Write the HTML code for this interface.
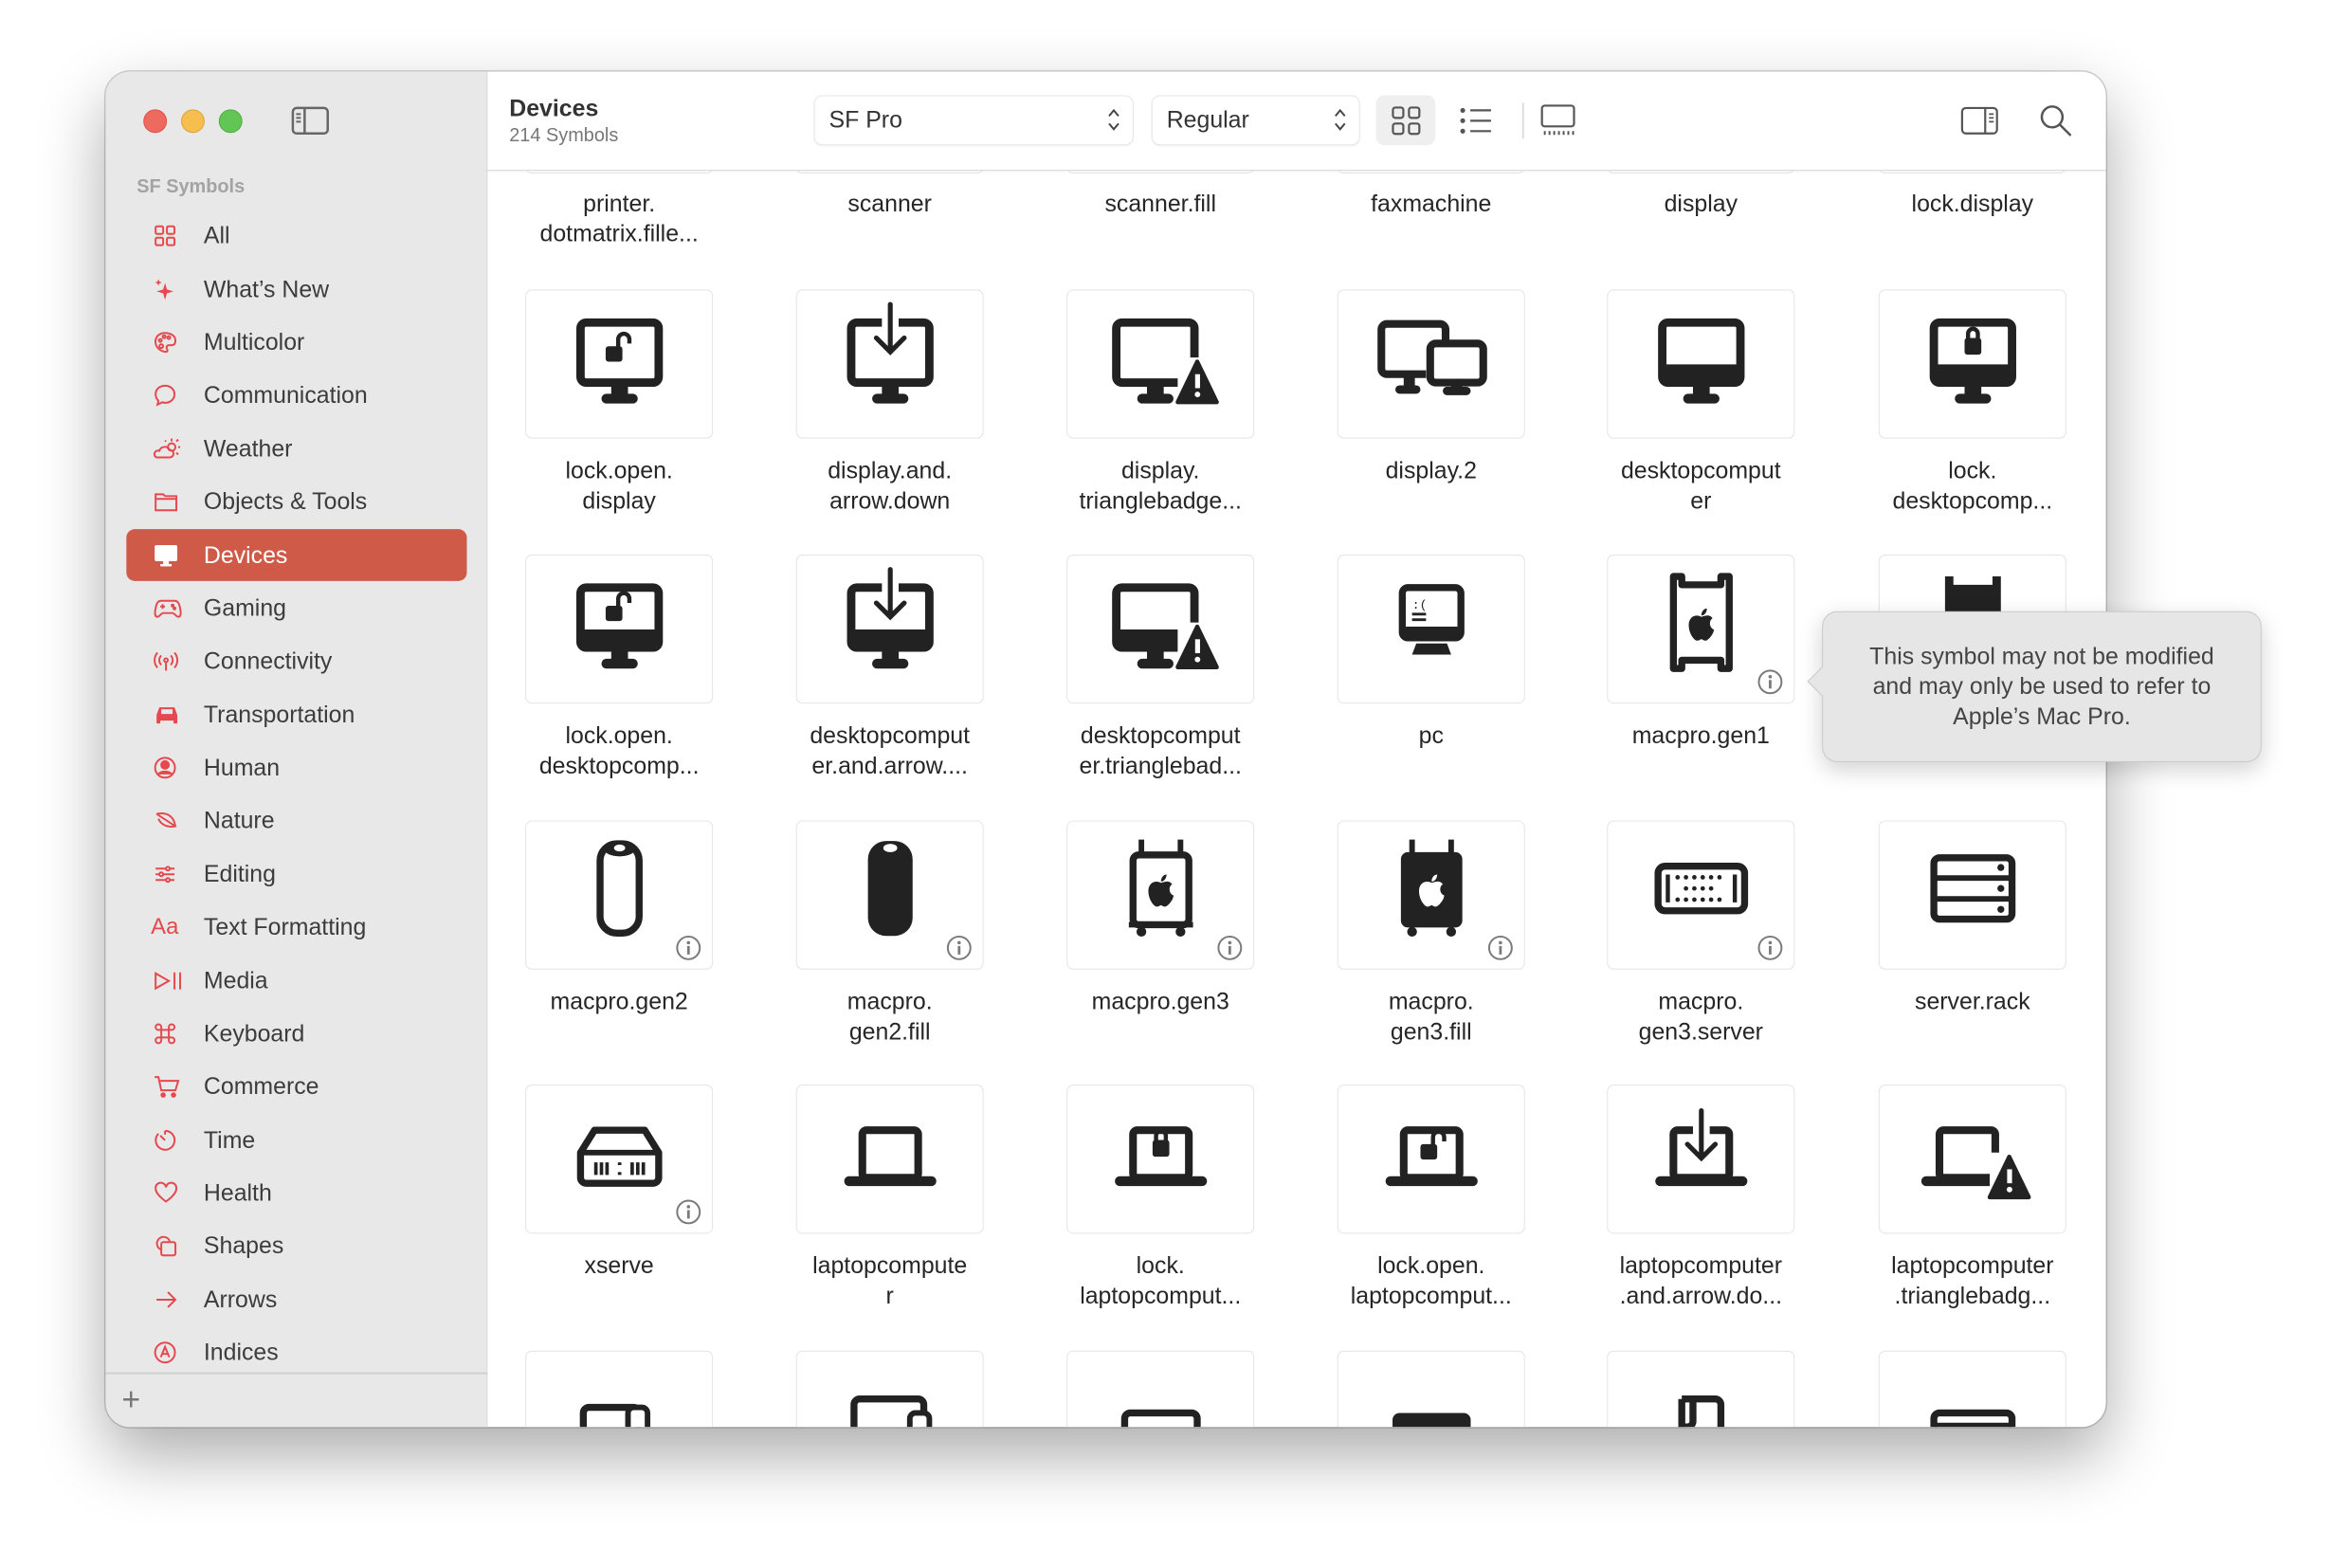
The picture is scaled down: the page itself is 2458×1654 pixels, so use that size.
<!DOCTYPE html>
<html><head><meta charset="utf-8"><style>
*{margin:0;padding:0;box-sizing:border-box}
body{width:2458px;height:1654px;background:#fff;position:relative;overflow:hidden;font-family:"Liberation Sans",sans-serif;}
.root{position:absolute;left:0;top:0;width:2470px;height:1662px;transform:scale(0.9949);transform-origin:0 0}
.win{position:absolute;left:112px;top:76px;width:2121px;height:1437px;border-radius:26px;overflow:hidden;background:#fff;box-shadow:0 30px 70px rgba(0,0,0,.33),0 0 0 1.5px rgba(0,0,0,.18);}
.side{position:absolute;left:0;top:0;width:405px;height:1437px;background:#e8e8e8;border-right:1px solid #dadada}
.tl{position:absolute;top:40px;width:25px;height:25px;border-radius:50%}
.it{position:absolute;left:0;width:405px;height:40px;line-height:40px;font-size:25px;color:#3c3c3c}
.it span{position:absolute;left:104px}
.it svg{position:absolute;left:50px;top:7px}
.sel{position:absolute;left:22px;width:361px;height:55px;background:#cf5a48;border-radius:9px}
.main{position:absolute;left:405px;top:0;width:1716px;height:1437px}
.tb{position:absolute;left:0;top:0;width:1716px;height:105px;background:#fff;border-bottom:1.5px solid #d9d9d9;z-index:5;box-shadow:0 1px 3px rgba(0,0,0,.06)}
.pop{position:absolute;top:25px;height:53px;border:1.5px solid #e6e6e6;border-radius:9px;background:#fff;font-size:25px;color:#333;line-height:50px;padding-left:15px;box-shadow:0 1px 2px rgba(0,0,0,.05)}
.content{position:absolute;left:0;top:105px;width:1716px;height:1332px;overflow:hidden}
.tile{position:absolute;width:199px;height:158px;border:1.5px solid #e3e3e3;border-radius:7px;background:#fff}
.tile svg.ic{position:absolute;left:25px;top:-3px;width:148px;height:148px}
.info{position:absolute;left:158px;top:120px;width:28px;height:28px}
.lb{position:absolute;width:287px;text-align:center;font-size:25px;line-height:32px;color:#262626}
.tip{position:absolute;left:1932px;top:648px;width:466px;height:160px;background:#e6e6e6;border:1.5px solid #c9c9c9;border-radius:16px;box-shadow:0 8px 24px rgba(0,0,0,.18);font-size:25px;line-height:32px;color:#444;text-align:center;padding-top:31px;z-index:20}
.tip:before{content:"";position:absolute;left:-12px;top:62px;width:22px;height:22px;background:#e6e6e6;border-left:1.5px solid #c9c9c9;border-bottom:1.5px solid #c9c9c9;transform:rotate(45deg)}
</style></head><body>
<svg width="0" height="0" style="position:absolute">
<defs>
<g id="mon"><rect x="22" y="25" width="56" height="43" rx="4" fill="none" stroke="#222" stroke-width="6"/><rect x="44" y="68" width="12" height="10" fill="#222"/><rect x="37" y="76" width="26" height="7" rx="3.5" fill="#222"/></g>
<g id="desk"><use href="#mon"/><rect x="22" y="55" width="56" height="14" rx="3" fill="#222"/></g>
<g id="lockc"><rect x="44" y="40" width="12" height="12" rx="2" fill="#222"/><path d="M46.5 41v-4a3.5 3.5 0 0 1 7 0v4" fill="none" stroke="#222" stroke-width="3"/></g>
<g id="locko"><rect x="40" y="42" width="12" height="11" rx="2" fill="#222"/><path d="M49 43v-6a4 4 0 0 1 8 0v3" fill="none" stroke="#222" stroke-width="3"/></g>
<g id="arr"><rect x="44" y="18" width="12" height="12" fill="#fff"/><path d="M50 12v34M40 36l10 10 10-10" fill="none" stroke="#222" stroke-width="3.5" stroke-linecap="round"/></g>
<g id="tri"><rect x="62" y="50" width="28" height="34" fill="#fff"/><path d="M76 53L90 82H62Z" fill="#222" stroke="#222" stroke-width="3" stroke-linejoin="round"/><rect x="74.5" y="62" width="3.5" height="10" fill="#fff"/><circle cx="76.2" cy="76.5" r="2" fill="#fff"/></g>
<g id="lap"><rect x="30" y="34" width="40" height="34" rx="3" fill="none" stroke="#222" stroke-width="5.5"/><rect x="17" y="67" width="66" height="7" rx="3.5" fill="#222"/></g>
<g id="apple"><path d="M50 46c-3-2-9-1-9 6c0 6 4 11 6 11c2 0 2-1 3-1s1 1 3 1c2 0 6-5 6-8c-3-1-4-6-1-8c-2-3-5-2-8-1z" fill="#222"/><path d="M50 45c0-3 2-5 4-5c0 3-2 5-4 5z" fill="#222"/></g>
<g id="info"><circle cx="14" cy="14" r="12" fill="#fff" stroke="#7a7a7a" stroke-width="2"/><rect x="12.6" y="12" width="2.8" height="9" fill="#7a7a7a"/><circle cx="14" cy="8.5" r="1.8" fill="#7a7a7a"/></g>
</defs></svg>
<div class="root">
<div class="win">
<div class="side">
 <div class="tl" style="left:40px;background:#ee6a5f;border:1px solid #d9534a"></div>
 <div class="tl" style="left:80px;background:#f5be4f;border:1px solid #dba53c"></div>
 <div class="tl" style="left:120px;background:#62c655;border:1px solid #50ac43"></div>
 <svg style="position:absolute;left:197px;top:37px" width="40" height="30" viewBox="0 0 40 30"><rect x="1.5" y="1.5" width="37" height="27" rx="4" fill="none" stroke="#666" stroke-width="2.5"/><path d="M14 2v26" stroke="#666" stroke-width="2.5"/><path d="M5 8h5M5 12h5M5 16h5" stroke="#666" stroke-width="2"/></svg>
 <div style="position:absolute;left:33px;top:111px;font-size:20px;font-weight:bold;color:#a3a3a3">SF Symbols</div>
 <div class="sel" style="top:485px"></div>

 <div class="it" style="top:154px"><svg width="26" height="26" viewBox="0 0 26 26" fill="none" stroke="#e5484d" stroke-width="2"><rect x="3" y="3" width="8" height="8" rx="1.5"/><rect x="15" y="3" width="8" height="8" rx="1.5"/><rect x="3" y="15" width="8" height="8" rx="1.5"/><rect x="15" y="15" width="8" height="8" rx="1.5"/></svg><span>All</span></div>
 <div class="it" style="top:211px"><svg width="26" height="26" viewBox="0 0 26 26" fill="#e5484d"><path d="M13 6l2 7 7 2-7 2-2 7-2-7-7-2 7-2z"/><path d="M6 2l1 2.5 2.5 1-2.5 1L6 9 5 6.5 2.5 5.5 5 4.5z"/></svg><span>What’s New</span></div>
 <div class="it" style="top:267px"><svg width="26" height="26" viewBox="0 0 26 26" fill="none" stroke="#e5484d" stroke-width="2"><path d="M13 3C6 3 2 8 3 14c1 6 7 9 11 9 2 0 2-2 1-3-1-2 0-4 2-4h3c3 0 4-2 4-5C24 6 19 3 13 3z"/><circle cx="8" cy="11" r="1.5"/><circle cx="12" cy="7" r="1.5"/><circle cx="17" cy="8" r="1.5"/><circle cx="9" cy="17" r="2"/></svg><span>Multicolor</span></div>
 <div class="it" style="top:323px"><svg width="26" height="26" viewBox="0 0 26 26" fill="none" stroke="#e5484d" stroke-width="2"><path d="M13 3c6 0 10 4 10 9s-4 9-10 9c-1 0-2 0-3-.5L5 23l1-4c-2-2-3-4-3-7 0-5 4-9 10-9z"/></svg><span>Communication</span></div>
 <div class="it" style="top:380px"><svg width="30" height="26" viewBox="0 0 30 26" fill="none" stroke="#e5484d" stroke-width="2"><path d="M4 22h14a4 4 0 0 0 0-8 6 6 0 0 0-11 1 3.5 3.5 0 0 0-3 7z"/><circle cx="20" cy="11" r="4"/><path d="M20 2v3M27 11h2M25 5l2-2M25 17l2 2M14 5l-1-1"/></svg><span>Weather</span></div>
 <div class="it" style="top:436px"><svg width="28" height="26" viewBox="0 0 28 26" fill="none" stroke="#e5484d" stroke-width="2"><path d="M3 5h8l2 2h12v15H3z"/><path d="M3 10h22"/></svg><span>Objects &amp; Tools</span></div>
 <div class="it" style="top:493px;color:#fff"><svg width="28" height="26" viewBox="0 0 28 26" fill="#fff"><rect x="2" y="2" width="24" height="17" rx="2"/><rect x="11" y="19" width="6" height="4"/><rect x="8" y="22" width="12" height="2.5"/></svg><span>Devices</span></div>
 <div class="it" style="top:549px"><svg width="32" height="26" viewBox="0 0 32 26" fill="none" stroke="#e5484d" stroke-width="2"><path d="M9 5h14c4 0 5 3 6 8 1 5 1 9-2 9-2 0-4-4-6-4H11c-2 0-4 4-6 4-3 0-3-4-2-9 1-5 2-8 6-8z"/><path d="M8 11h5M10.5 8.5v5"/><circle cx="21" cy="10" r="1"/><circle cx="23" cy="13" r="1"/></svg><span>Gaming</span></div>
 <div class="it" style="top:605px"><svg width="28" height="26" viewBox="0 0 28 26" fill="none" stroke="#e5484d" stroke-width="2"><circle cx="14" cy="12" r="2"/><path d="M14 14v9M9 7a7 7 0 0 0 0 10M19 7a7 7 0 0 1 0 10M5 4a12 12 0 0 0 0 16M23 4a12 12 0 0 1 0 16"/></svg><span>Connectivity</span></div>
 <div class="it" style="top:662px"><svg width="30" height="26" viewBox="0 0 30 26" fill="#e5484d"><path d="M7 5h16l3 8v9h-4v-3H8v3H4v-9z"/><rect x="9" y="7" width="12" height="5" fill="#e8e8e8"/></svg><span>Transportation</span></div>
 <div class="it" style="top:718px"><svg width="26" height="26" viewBox="0 0 26 26" fill="none" stroke="#e5484d" stroke-width="2"><circle cx="13" cy="13" r="10.5"/><circle cx="13" cy="10" r="4" fill="#e5484d"/><path d="M6 20c2-4 12-4 14 0" fill="#e5484d"/></svg><span>Human</span></div>
 <div class="it" style="top:774px"><svg width="28" height="26" viewBox="0 0 28 26" fill="none" stroke="#e5484d" stroke-width="2"><path d="M4 6c10-2 18 1 20 13-10 2-16-3-18-8M4 6l20 13"/></svg><span>Nature</span></div>
 <div class="it" style="top:831px"><svg width="26" height="26" viewBox="0 0 26 26" fill="none" stroke="#e5484d" stroke-width="2"><path d="M3 7h20M3 13h20M3 19h20"/><circle cx="16" cy="7" r="2" fill="#e8e8e8"/><circle cx="9" cy="13" r="2" fill="#e8e8e8"/><circle cx="16" cy="19" r="2" fill="#e8e8e8"/></svg><span>Editing</span></div>
 <div class="it" style="top:887px"><span style="left:48px;color:#e5484d;font-size:24px">Aa</span><span>Text Formatting</span></div>
 <div class="it" style="top:944px"><svg width="34" height="26" viewBox="0 0 34 26" fill="none" stroke="#e5484d" stroke-width="2"><path d="M3 5l14 8-14 8z"/><path d="M23 4v18M29 4v18"/></svg><span>Media</span></div>
 <div class="it" style="top:1000px"><svg width="26" height="26" viewBox="0 0 26 26" fill="none" stroke="#e5484d" stroke-width="2"><path d="M9 9h8v8H9zM9 9H6a3 3 0 1 1 3-3zM17 9V6a3 3 0 1 1 3 3zM17 17h3a3 3 0 1 1-3 3zM9 17v3a3 3 0 1 1-3-3z"/></svg><span>Keyboard</span></div>
 <div class="it" style="top:1056px"><svg width="30" height="26" viewBox="0 0 30 26" fill="none" stroke="#e5484d" stroke-width="2"><path d="M2 3h4l3 14h15l3-10H8"/><circle cx="11" cy="22" r="1.8" fill="#e5484d"/><circle cx="22" cy="22" r="1.8" fill="#e5484d"/></svg><span>Commerce</span></div>
 <div class="it" style="top:1113px"><svg width="26" height="26" viewBox="0 0 26 26" fill="none" stroke="#e5484d" stroke-width="2"><path d="M13 3a10 10 0 1 1-7 3"/><path d="M13 3v4M8 8l5 5"/></svg><span>Time</span></div>
 <div class="it" style="top:1169px"><svg width="28" height="26" viewBox="0 0 28 26" fill="none" stroke="#e5484d" stroke-width="2"><path d="M14 22C6 16 3 12 3 8a5.5 5.5 0 0 1 11-1 5.5 5.5 0 0 1 11 1c0 4-3 8-11 14z"/></svg><span>Health</span></div>
 <div class="it" style="top:1225px"><svg width="28" height="26" viewBox="0 0 28 26" fill="none" stroke="#e5484d" stroke-width="2"><path d="M9 17a7 7 0 1 1 9-9"/><rect x="9" y="9" width="15" height="14" rx="2"/></svg><span>Shapes</span></div>
 <div class="it" style="top:1282px"><svg width="28" height="26" viewBox="0 0 28 26" fill="none" stroke="#e5484d" stroke-width="2"><path d="M4 13h20M16 5l8 8-8 8"/></svg><span>Arrows</span></div>
 <div class="it" style="top:1338px"><svg width="26" height="26" viewBox="0 0 26 26" fill="none" stroke="#e5484d" stroke-width="2"><circle cx="13" cy="13" r="10.5"/><path d="M8.5 18l4.5-11 4.5 11M10 14.5h6"/></svg><span>Indices</span></div>

 <div style="position:absolute;left:0;top:1379px;width:405px;height:1.5px;background:#cfcfcf"></div>
 <div style="position:absolute;left:17px;top:1389px;font-size:34px;color:#777;font-weight:200">+</div>
</div>

<div class="main">
 <div class="tb">
  <div style="position:absolute;left:23px;top:25px;font-size:25px;font-weight:bold;color:#333">Devices</div>
  <div style="position:absolute;left:23px;top:57px;font-size:20px;color:#777">214 Symbols</div>
  <div class="pop" style="left:346px;width:339px">SF Pro<svg style="position:absolute;right:12px;top:11px" width="16" height="28" viewBox="0 0 16 28" fill="none" stroke="#444" stroke-width="2"><path d="M3 10l5-6 5 6M3 18l5 6 5-6"/></svg></div>
  <div class="pop" style="left:704px;width:221px">Regular<svg style="position:absolute;right:12px;top:11px" width="16" height="28" viewBox="0 0 16 28" fill="none" stroke="#444" stroke-width="2"><path d="M3 10l5-6 5 6M3 18l5 6 5-6"/></svg></div>
  <div style="position:absolute;left:942px;top:25px;width:63px;height:53px;background:#efefef;border-radius:9px"></div>
  <svg style="position:absolute;left:958px;top:36px" width="32" height="32" viewBox="0 0 32 32" fill="none" stroke="#555" stroke-width="2.2"><rect x="2" y="2" width="11" height="11" rx="2.5"/><rect x="19" y="2" width="11" height="11" rx="2.5"/><rect x="2" y="19" width="11" height="11" rx="2.5"/><rect x="19" y="19" width="11" height="11" rx="2.5"/></svg>
  <svg style="position:absolute;left:1030px;top:37px" width="36" height="30" viewBox="0 0 36 30" fill="none" stroke="#555" stroke-width="2.2"><path d="M12 4h22M12 15h22M12 26h22"/><circle cx="4" cy="4" r="1.5" fill="#555"/><circle cx="4" cy="15" r="1.5" fill="#555"/><circle cx="4" cy="26" r="1.5" fill="#555"/></svg>
  <div style="position:absolute;left:1097px;top:33px;width:1.5px;height:38px;background:#ddd"></div>
  <svg style="position:absolute;left:1116px;top:34px" width="38" height="36" viewBox="0 0 38 36" fill="none" stroke="#555" stroke-width="2.2"><rect x="2" y="2" width="34" height="22" rx="3"/><path d="M4 31h2M9 31h2M14 31h2M19 31h2M24 31h2M29 31h2M34 31h2" stroke-width="4"/></svg>
  <svg style="position:absolute;left:1562px;top:37px" width="40" height="30" viewBox="0 0 40 30" fill="none" stroke="#555" stroke-width="2.2"><rect x="1.5" y="1.5" width="37" height="27" rx="4"/><path d="M26 2v26"/><path d="M30 8h5M30 12h5M30 16h5" stroke-width="1.8"/></svg>
  <svg style="position:absolute;left:1645px;top:34px" width="36" height="36" viewBox="0 0 36 36" fill="none" stroke="#555" stroke-width="2.5"><circle cx="14" cy="14" r="11"/><path d="M22 22l11 11" stroke-linecap="round"/></svg>
 </div>

 <div class="content">
  <div class="tile" style="left:40px;top:-155px"></div><div class="tile" style="left:327px;top:-155px"></div><div class="tile" style="left:614px;top:-155px"></div><div class="tile" style="left:901px;top:-155px"></div><div class="tile" style="left:1187px;top:-155px"></div><div class="tile" style="left:1475px;top:-155px"></div>
  <div class="lb" style="left:-4px;top:19px">printer.<br>dotmatrix.fille...</div>
  <div class="lb" style="left:283px;top:19px">scanner</div>
  <div class="lb" style="left:570px;top:19px">scanner.fill</div>
  <div class="lb" style="left:857px;top:19px">faxmachine</div>
  <div class="lb" style="left:1143px;top:19px">display</div>
  <div class="lb" style="left:1431px;top:19px">lock.display</div>

  <div class="tile" style="left:40px;top:126px"><svg class="ic" viewBox="0 0 100 100"><use href="#mon"/><use href="#locko"/></svg></div>
  <div class="tile" style="left:327px;top:126px"><svg class="ic" viewBox="0 0 100 100"><use href="#mon"/><use href="#arr"/></svg></div>
  <div class="tile" style="left:614px;top:126px"><svg class="ic" viewBox="0 0 100 100"><g transform="translate(-4 0)"><use href="#mon"/></g><use href="#tri"/></svg></div>
  <div class="tile" style="left:901px;top:126px"><svg class="ic" viewBox="0 0 100 100"><rect x="14" y="26" width="46" height="36" rx="4" fill="none" stroke="#222" stroke-width="5.5"/><rect x="30" y="62" width="8" height="10" fill="#222"/><rect x="24" y="70" width="18" height="6" rx="3" fill="#222"/><rect x="46" y="38" width="46" height="30" rx="4" fill="#fff"/><rect x="49" y="40" width="38" height="28" rx="4" fill="none" stroke="#222" stroke-width="5.5"/><rect x="64" y="68" width="8" height="5" fill="#222"/><rect x="58" y="71" width="20" height="6" rx="3" fill="#222"/></svg></div>
  <div class="tile" style="left:1187px;top:126px"><svg class="ic" viewBox="0 0 100 100"><use href="#desk"/></svg></div>
  <div class="tile" style="left:1475px;top:126px"><svg class="ic" viewBox="0 0 100 100"><use href="#desk"/><g transform="translate(0 -4)"><use href="#lockc"/></g></svg></div>
  <div class="lb" style="left:-4px;top:302px">lock.open.<br>display</div>
  <div class="lb" style="left:283px;top:302px">display.and.<br>arrow.down</div>
  <div class="lb" style="left:570px;top:302px">display.<br>trianglebadge...</div>
  <div class="lb" style="left:857px;top:302px">display.2</div>
  <div class="lb" style="left:1143px;top:302px">desktopcomput<br>er</div>
  <div class="lb" style="left:1431px;top:302px">lock.<br>desktopcomp...</div>

  <div class="tile" style="left:40px;top:407px"><svg class="ic" viewBox="0 0 100 100"><use href="#desk"/><g transform="translate(0 -4)"><use href="#locko"/></g></svg></div>
  <div class="tile" style="left:327px;top:407px"><svg class="ic" viewBox="0 0 100 100"><use href="#desk"/><use href="#arr"/></svg></div>
  <div class="tile" style="left:614px;top:407px"><svg class="ic" viewBox="0 0 100 100"><g transform="translate(-4 0)"><use href="#desk"/></g><use href="#tri"/></svg></div>
  <div class="tile" style="left:901px;top:407px"><svg class="ic" viewBox="0 0 100 100"><rect x="29" y="25" width="42" height="36" rx="4" fill="none" stroke="#222" stroke-width="5"/><rect x="29" y="53" width="42" height="10" rx="3" fill="#222"/><path d="M39 65h22l3 8H36z" fill="#222"/><text x="36" y="40" font-size="9" font-family="Liberation Mono" fill="#222">:(</text><path d="M36 44h10M36 48h10" stroke="#222" stroke-width="2"/></svg></div>
  <div class="tile" style="left:1187px;top:407px"><svg class="ic" viewBox="0 0 100 100"><path d="M30 17h6v6h28v-6h6v66h-6v-6H36v6h-6z" fill="none" stroke="#222" stroke-width="5" stroke-linejoin="round"/><use href="#apple"/></svg><svg class="info" viewBox="0 0 28 28"><use href="#info"/></svg></div>
  <div class="tile" style="left:1475px;top:407px"><svg class="ic" viewBox="0 0 100 100"><path d="M30 17h6v6h28v-6h6v66h-6v-6H36v6h-6z" fill="#222"/></svg></div>
  <div class="lb" style="left:-4px;top:583px">lock.open.<br>desktopcomp...</div>
  <div class="lb" style="left:283px;top:583px">desktopcomput<br>er.and.arrow....</div>
  <div class="lb" style="left:570px;top:583px">desktopcomput<br>er.trianglebad...</div>
  <div class="lb" style="left:857px;top:583px">pc</div>
  <div class="lb" style="left:1143px;top:583px">macpro.gen1</div>

  <div class="tile" style="left:40px;top:689px"><svg class="ic" viewBox="0 0 100 100"><rect x="36" y="18" width="28" height="64" rx="12" fill="none" stroke="#222" stroke-width="5"/><ellipse cx="50" cy="22" rx="11" ry="5" fill="#222"/><ellipse cx="50" cy="21" rx="4" ry="2.5" fill="#fff"/></svg><svg class="info" viewBox="0 0 28 28"><use href="#info"/></svg></div>
  <div class="tile" style="left:327px;top:689px"><svg class="ic" viewBox="0 0 100 100"><rect x="34" y="16" width="32" height="68" rx="13" fill="#222"/><ellipse cx="50" cy="21" rx="5" ry="3" fill="#fff"/></svg><svg class="info" viewBox="0 0 28 28"><use href="#info"/></svg></div>
  <div class="tile" style="left:614px;top:689px"><svg class="ic" viewBox="0 0 100 100"><rect x="30" y="26" width="40" height="50" rx="4" fill="none" stroke="#222" stroke-width="5"/><path d="M36 15v11M64 15v11M27 76h46" stroke="#222" stroke-width="4"/><circle cx="36" cy="81" r="3.5" fill="#222"/><circle cx="64" cy="81" r="3.5" fill="#222"/><use href="#apple"/></svg><svg class="info" viewBox="0 0 28 28"><use href="#info"/></svg></div>
  <div class="tile" style="left:901px;top:689px"><svg class="ic" viewBox="0 0 100 100"><rect x="28" y="24" width="44" height="54" rx="5" fill="#222"/><path d="M36 15v11M64 15v11" stroke="#222" stroke-width="4"/><circle cx="36" cy="81" r="3.5" fill="#222"/><circle cx="64" cy="81" r="3.5" fill="#222"/><path d="M50 46c-3-2-9-1-9 6c0 6 4 11 6 11c2 0 2-1 3-1s1 1 3 1c2 0 6-5 6-8c-3-1-4-6-1-8c-2-3-5-2-8-1zM50 45c0-3 2-5 4-5c0 3-2 5-4 5z" fill="#fff"/></svg><svg class="info" viewBox="0 0 28 28"><use href="#info"/></svg></div>
  <div class="tile" style="left:1187px;top:689px"><svg class="ic" viewBox="0 0 100 100"><rect x="19" y="34" width="62" height="32" rx="5" fill="none" stroke="#222" stroke-width="5"/><path d="M26 40v20M74 40v20" stroke="#222" stroke-width="3"/><g fill="#222"><circle cx="33" cy="42" r="1.6"/><circle cx="39" cy="42" r="1.6"/><circle cx="45" cy="42" r="1.6"/><circle cx="51" cy="42" r="1.6"/><circle cx="57" cy="42" r="1.6"/><circle cx="63" cy="42" r="1.6"/><circle cx="39" cy="50" r="1.6"/><circle cx="45" cy="50" r="1.6"/><circle cx="51" cy="50" r="1.6"/><circle cx="57" cy="50" r="1.6"/><circle cx="33" cy="58" r="1.6"/><circle cx="39" cy="58" r="1.6"/><circle cx="45" cy="58" r="1.6"/><circle cx="51" cy="58" r="1.6"/><circle cx="57" cy="58" r="1.6"/><circle cx="63" cy="58" r="1.6"/></g></svg><svg class="info" viewBox="0 0 28 28"><use href="#info"/></svg></div>
  <div class="tile" style="left:1475px;top:689px"><svg class="ic" viewBox="0 0 100 100"><rect x="22" y="28" width="56" height="44" rx="4" fill="none" stroke="#222" stroke-width="5"/><path d="M22 42.5h56M22 57.5h56" stroke="#222" stroke-width="4"/><circle cx="70" cy="35" r="2.5" fill="#222"/><circle cx="70" cy="50" r="2.5" fill="#222"/><circle cx="70" cy="65" r="2.5" fill="#222"/></svg></div>
  <div class="lb" style="left:-4px;top:865px">macpro.gen2</div>
  <div class="lb" style="left:283px;top:865px">macpro.<br>gen2.fill</div>
  <div class="lb" style="left:570px;top:865px">macpro.gen3</div>
  <div class="lb" style="left:857px;top:865px">macpro.<br>gen3.fill</div>
  <div class="lb" style="left:1143px;top:865px">macpro.<br>gen3.server</div>
  <div class="lb" style="left:1431px;top:865px">server.rack</div>

  <div class="tile" style="left:40px;top:969px"><svg class="ic" viewBox="0 0 100 100"><path d="M32 34h36l10 16v18a4 4 0 0 1-4 4H26a4 4 0 0 1-4-4V50z" fill="none" stroke="#222" stroke-width="5" stroke-linejoin="round"/><path d="M22 50h56" stroke="#222" stroke-width="4"/><path d="M33 57v9M37 57v9M41 57v9M50 57v2M50 64v2M59 57v9M63 57v9M67 57v9" stroke="#222" stroke-width="2.5"/></svg><svg class="info" viewBox="0 0 28 28"><use href="#info"/></svg></div>
  <div class="tile" style="left:327px;top:969px"><svg class="ic" viewBox="0 0 100 100"><use href="#lap"/></svg></div>
  <div class="tile" style="left:614px;top:969px"><svg class="ic" viewBox="0 0 100 100"><use href="#lap"/><g transform="translate(0 1)"><use href="#lockc"/></g></svg></div>
  <div class="tile" style="left:901px;top:969px"><svg class="ic" viewBox="0 0 100 100"><use href="#lap"/><g transform="translate(2 2)"><use href="#locko"/></g></svg></div>
  <div class="tile" style="left:1187px;top:969px"><svg class="ic" viewBox="0 0 100 100"><use href="#lap"/><g transform="translate(0 8)"><use href="#arr"/></g></svg></div>
  <div class="tile" style="left:1475px;top:969px"><svg class="ic" viewBox="0 0 100 100"><g transform="translate(-4 0)"><use href="#lap"/></g><use href="#tri"/></svg></div>
  <div class="lb" style="left:-4px;top:1145px">xserve</div>
  <div class="lb" style="left:283px;top:1145px">laptopcompute<br>r</div>
  <div class="lb" style="left:570px;top:1145px">lock.<br>laptopcomput...</div>
  <div class="lb" style="left:857px;top:1145px">lock.open.<br>laptopcomput...</div>
  <div class="lb" style="left:1143px;top:1145px">laptopcomputer<br>.and.arrow.do...</div>
  <div class="lb" style="left:1431px;top:1145px">laptopcomputer<br>.trianglebadg...</div>

  <div class="tile" style="left:40px;top:1251px"><svg class="ic" viewBox="0 0 100 100"><rect x="24" y="42" width="40" height="40" rx="4" fill="none" stroke="#222" stroke-width="5"/><rect x="56" y="42" width="14" height="40" rx="4" fill="#fff" stroke="#222" stroke-width="4"/></svg></div>
  <div class="tile" style="left:327px;top:1251px"><svg class="ic" viewBox="0 0 100 100"><rect x="24" y="36" width="50" height="46" rx="4" fill="none" stroke="#222" stroke-width="5"/><rect x="64" y="46" width="14" height="40" rx="4" fill="#fff" stroke="#222" stroke-width="4"/></svg></div>
  <div class="tile" style="left:614px;top:1251px"><svg class="ic" viewBox="0 0 100 100"><rect x="24" y="46" width="52" height="40" rx="4" fill="none" stroke="#222" stroke-width="5"/></svg></div>
  <div class="tile" style="left:901px;top:1251px"><svg class="ic" viewBox="0 0 100 100"><rect x="22" y="46" width="56" height="40" rx="5" fill="#222"/></svg></div>
  <div class="tile" style="left:1187px;top:1251px"><svg class="ic" viewBox="0 0 100 100"><path d="M36 36h24a4 4 0 0 1 4 4v46M36 36v20h4a4 4 0 0 0 4-4V36" fill="none" stroke="#222" stroke-width="5"/><path d="M36 56v30" stroke="#222" stroke-width="5"/></svg></div>
  <div class="tile" style="left:1475px;top:1251px"><svg class="ic" viewBox="0 0 100 100"><rect x="22" y="46" width="56" height="40" rx="4" fill="none" stroke="#222" stroke-width="5"/><path d="M22 55h56" stroke="#222" stroke-width="4"/></svg></div>
 </div>
</div>
</div>

<div class="tip">This symbol may not be modified<br>and may only be used to refer to<br>Apple’s Mac Pro.</div>
</div>
</body></html>
